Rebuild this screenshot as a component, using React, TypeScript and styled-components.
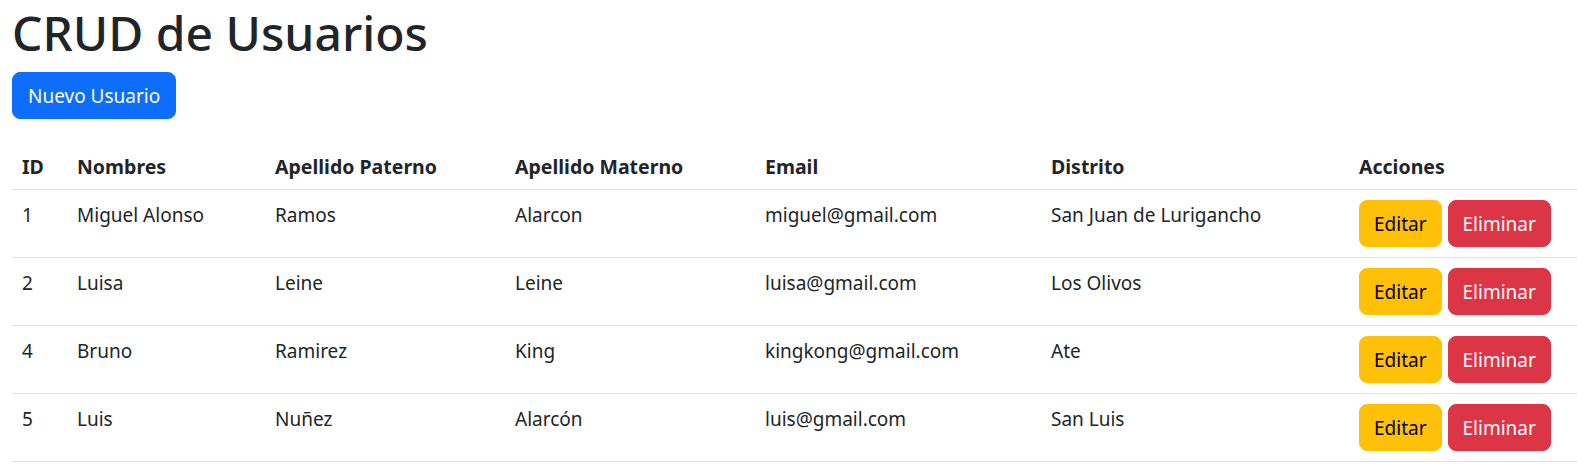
import React from "react";
import styled, { createGlobalStyle } from "styled-components";

const GlobalStyle = createGlobalStyle`
  html, body {
    margin: 0;
    padding: 0;
    background: #ffffff;
  }
  body {
    font-family: "Segoe UI", "Noto Sans", "Open Sans", sans-serif;
    font-size: 19px;
    line-height: 30px;
    color: #212529;
  }
  * { box-sizing: border-box; }
`;

const Page = styled.div`
  padding: 0 0 0 12px;
`;

const Title = styled.h1`
  margin: 0 0 9px;
  padding-top: 3px;
  font-size: 48px;
  line-height: 60px;
  font-weight: 500;
  color: #212529;
`;

type Variant = "primary" | "warning" | "danger";

const palette: Record<Variant, { bg: string; fg: string }> = {
  primary: { bg: "#0d6efd", fg: "#ffffff" },
  warning: { bg: "#ffc107", fg: "#000000" },
  danger: { bg: "#dc3545", fg: "#ffffff" },
};

const Button = styled.button<{ $variant: Variant; $pad?: number }>`
  display: inline-flex;
  align-items: center;
  justify-content: center;
  height: 47px;
  padding: 0 ${(p) => p.$pad ?? 15}px;
  border: 1px solid ${(p) => palette[p.$variant].bg};
  border-radius: 8px;
  background: ${(p) => palette[p.$variant].bg};
  color: ${(p) => palette[p.$variant].fg};
  font-family: inherit;
  font-size: 19px;
  line-height: 30px;
  font-weight: 400;
  cursor: pointer;
`;

const Table = styled.table`
  width: 100%;
  margin-top: 20px;
  border-collapse: collapse;
  table-layout: fixed;
`;

const HeadCell = styled.th`
  padding: 12.5px 10px 7.5px;
  text-align: left;
  vertical-align: top;
  font-size: 19.5px;
  font-weight: 700;
  border-bottom: 1px solid #dee2e6;
`;

const Cell = styled.td`
  padding: 10px;
  text-align: left;
  vertical-align: top;
  border-bottom: 1px solid #dee2e6;
`;

const Actions = styled.div`
  display: flex;
  gap: 6px;
`;

const columns: { label: string; width?: number }[] = [
  { label: "ID", width: 55 },
  { label: "Nombres", width: 198 },
  { label: "Apellido Paterno", width: 240 },
  { label: "Apellido Materno", width: 250 },
  { label: "Email", width: 286 },
  { label: "Distrito", width: 308 },
  { label: "Acciones" },
];

const users = [
  { id: 1, nombres: "Miguel Alonso", paterno: "Ramos", materno: "Alarcon", email: "miguel@gmail.com", distrito: "San Juan de Lurigancho" },
  { id: 2, nombres: "Luisa", paterno: "Leine", materno: "Leine", email: "luisa@gmail.com", distrito: "Los Olivos" },
  { id: 4, nombres: "Bruno", paterno: "Ramirez", materno: "King", email: "kingkong@gmail.com", distrito: "Ate" },
  { id: 5, nombres: "Luis", paterno: "Nuñez", materno: "Alarcón", email: "luis@gmail.com", distrito: "San Luis" },
];

export default function App() {
  return (
    <>
      <GlobalStyle />
      <Page>
        <Title>CRUD de Usuarios</Title>
        <Button $variant="primary">Nuevo Usuario</Button>
        <Table>
          <colgroup>
            {columns.map((c) => (
              <col key={c.label} style={c.width ? { width: c.width } : undefined} />
            ))}
          </colgroup>
          <thead>
            <tr>
              {columns.map((c) => (
                <HeadCell key={c.label}>{c.label}</HeadCell>
              ))}
            </tr>
          </thead>
          <tbody>
            {users.map((u) => (
              <tr key={u.id}>
                <Cell>{u.id}</Cell>
                <Cell>{u.nombres}</Cell>
                <Cell>{u.paterno}</Cell>
                <Cell>{u.materno}</Cell>
                <Cell>{u.email}</Cell>
                <Cell>{u.distrito}</Cell>
                <Cell>
                  <Actions>
                    <Button $variant="warning" $pad={14}>Editar</Button>
                    <Button $variant="danger" $pad={14}>Eliminar</Button>
                  </Actions>
                </Cell>
              </tr>
            ))}
          </tbody>
        </Table>
      </Page>
    </>
  );
}
